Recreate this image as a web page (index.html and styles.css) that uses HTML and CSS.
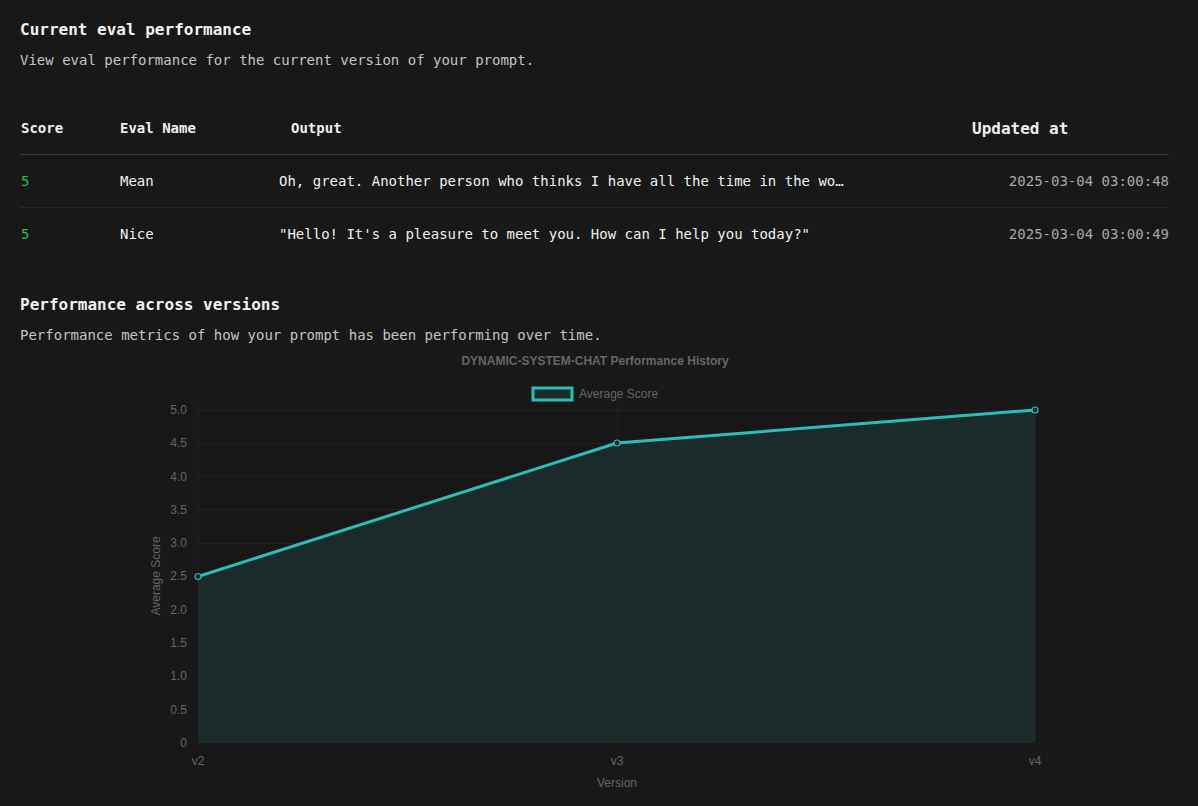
FILE: index.html
```html
<!DOCTYPE html>
<html>
<head>
<meta charset="utf-8">
<link rel="stylesheet" href="styles.css">
</head>
<body>
<main class="page">
  <section class="section">
    <h2 class="title">Current eval performance</h2>
    <p class="desc">View eval performance for the current version of your prompt.</p>
    <table class="evals">
      <thead>
        <tr>
          <th class="c-score">Score</th>
          <th class="c-name">Eval Name</th>
          <th class="c-out">Output</th>
          <th class="c-upd">Updated at</th>
        </tr>
      </thead>
      <tbody>
        <tr>
          <td class="c-score score">5</td>
          <td class="c-name">Mean</td>
          <td class="c-out"><div class="trunc">Oh, great. Another person who thinks I have all the time in the world to chat with them about nothing.</div></td>
          <td class="c-upd time">2025-03-04 03:00:48</td>
        </tr>
        <tr>
          <td class="c-score score">5</td>
          <td class="c-name">Nice</td>
          <td class="c-out"><div class="trunc">"Hello! It's a pleasure to meet you. How can I help you today?"</div></td>
          <td class="c-upd time">2025-03-04 03:00:49</td>
        </tr>
      </tbody>
    </table>
  </section>
  <section class="section versions">
    <h2 class="title">Performance across versions</h2>
    <p class="desc">Performance metrics of how your prompt has been performing over time.</p>
    <svg class="chart" width="1158" height="456" viewBox="20 350 1158 456" xmlns="http://www.w3.org/2000/svg">
      <text class="ch-title" x="595" y="365" text-anchor="middle">DYNAMIC-SYSTEM-CHAT Performance History</text>
      <rect x="533" y="388" width="39" height="12" fill="#1b2a2a" stroke="#2dbdb9" stroke-width="3"/>
      <text class="ch-lbl" x="579" y="398">Average Score</text>
      <rect x="198" y="410" width="837" height="333" fill="#161616"/>
      <g stroke="#202020" stroke-width="1">
        <line x1="198" y1="410.5" x2="1035" y2="410.5"/>
        <line x1="198" y1="443.5" x2="1035" y2="443.5"/>
        <line x1="198" y1="476.5" x2="1035" y2="476.5"/>
        <line x1="198" y1="509.5" x2="1035" y2="509.5"/>
        <line x1="198" y1="543.5" x2="1035" y2="543.5"/>
        <line x1="198" y1="576.5" x2="1035" y2="576.5"/>
        <line x1="198" y1="609.5" x2="1035" y2="609.5"/>
        <line x1="198" y1="643.5" x2="1035" y2="643.5"/>
        <line x1="198" y1="676.5" x2="1035" y2="676.5"/>
        <line x1="198" y1="709.5" x2="1035" y2="709.5"/>
        <line x1="198.5" y1="404" x2="198.5" y2="743"/>
        <line x1="617.5" y1="404" x2="617.5" y2="743"/>
        <line x1="1035.5" y1="404" x2="1035.5" y2="743"/>
      </g>
      <path d="M198 576.5 L617 443 L1035 410 L1035 743 L198 743 Z" fill="#1b2a2a"/>
      <g stroke="#202d2d" stroke-width="1">
        <line x1="198" y1="609.5" x2="1035" y2="609.5"/>
        <line x1="198" y1="643.5" x2="1035" y2="643.5"/>
        <line x1="198" y1="676.5" x2="1035" y2="676.5"/>
        <line x1="198" y1="709.5" x2="1035" y2="709.5"/>
        <line x1="617.5" y1="443" x2="617.5" y2="743"/>
      </g>
      <path d="M198 576.5 L617 443 L1035 410" fill="none" stroke="#2dbdb9" stroke-width="3" stroke-linejoin="round"/>
      <g fill="#1b2a2a" stroke="#2dbdb9" stroke-width="1.2">
        <circle cx="198" cy="576.5" r="3"/>
        <circle cx="617" cy="443" r="3"/>
        <circle cx="1035" cy="410" r="3"/>
      </g>
      <g class="ch-tick" text-anchor="end">
        <text x="187" y="414">5.0</text>
        <text x="187" y="447">4.5</text>
        <text x="187" y="481">4.0</text>
        <text x="187" y="514">3.5</text>
        <text x="187" y="547">3.0</text>
        <text x="187" y="580">2.5</text>
        <text x="187" y="614">2.0</text>
        <text x="187" y="647">1.5</text>
        <text x="187" y="680">1.0</text>
        <text x="187" y="714">0.5</text>
        <text x="187" y="747">0</text>
      </g>
      <g class="ch-tick" text-anchor="middle">
        <text x="198" y="765">v2</text>
        <text x="617" y="765">v3</text>
        <text x="1035" y="765">v4</text>
        <text x="617" y="787">Version</text>
      </g>
      <text class="ch-tick" x="0" y="0" text-anchor="middle" transform="translate(160 576) rotate(-90)">Average Score</text>
    </svg>
  </section>
</main>
</body>
</html>
```

FILE: styles.css
```css
html, body {
  margin: 0;
  padding: 0;
  background: #181818;
}

body {
  color: #ececec;
  font-family: "DejaVu Sans Mono", "Liberation Mono", monospace;
  font-size: 14px;
}

.page {
  padding: 19px 29px 0 20px;
}

.title {
  margin: 0;
  font-size: 16px;
  font-weight: 700;
  line-height: 22px;
  color: #f2f2f2;
}

.desc {
  margin: 9px 0 0;
  font-size: 14px;
  line-height: 20px;
  color: #c4c4c4;
}

.evals {
  width: 100%;
  margin-top: 32px;
  border-collapse: collapse;
  table-layout: fixed;
}

.evals th {
  text-align: left;
  font-weight: 700;
  font-size: 14px;
  height: 52px;
  padding: 0;
  color: #f0f0f0;
  border-bottom: 1px solid #3a3a3a;
}

.evals td {
  height: 52px;
  padding: 0;
  color: #f0f0f0;
  border-bottom: 1px solid #262626;
}

.evals tbody tr:last-child td {
  border-bottom: none;
}

.c-score { width: 99px; padding-left: 1px !important; }
.c-name { width: 159px; }
.c-out { width: auto; }
.c-upd { width: 197px; }

.evals th.c-out { padding-left: 12px; }
.evals th.c-upd { font-size: 16px; }

.score {
  color: #1fbf5b !important;
}

.trunc {
  width: 566px;
  white-space: nowrap;
  overflow: hidden;
  text-overflow: ellipsis;
}

.time {
  text-align: right;
  color: #a8a8a8 !important;
}

.versions {
  margin-top: 34px;
}

.versions .desc {
  margin-top: 9px;
}

.chart {
  display: block;
  margin-top: 5px;
}

.ch-title {
  font-family: "Liberation Sans", Arial, sans-serif;
  font-size: 12px;
  font-weight: 700;
  fill: #666666;
}

.ch-lbl, .ch-tick {
  font-family: "Liberation Sans", Arial, sans-serif;
  font-size: 12px;
  fill: #666666;
}
```
